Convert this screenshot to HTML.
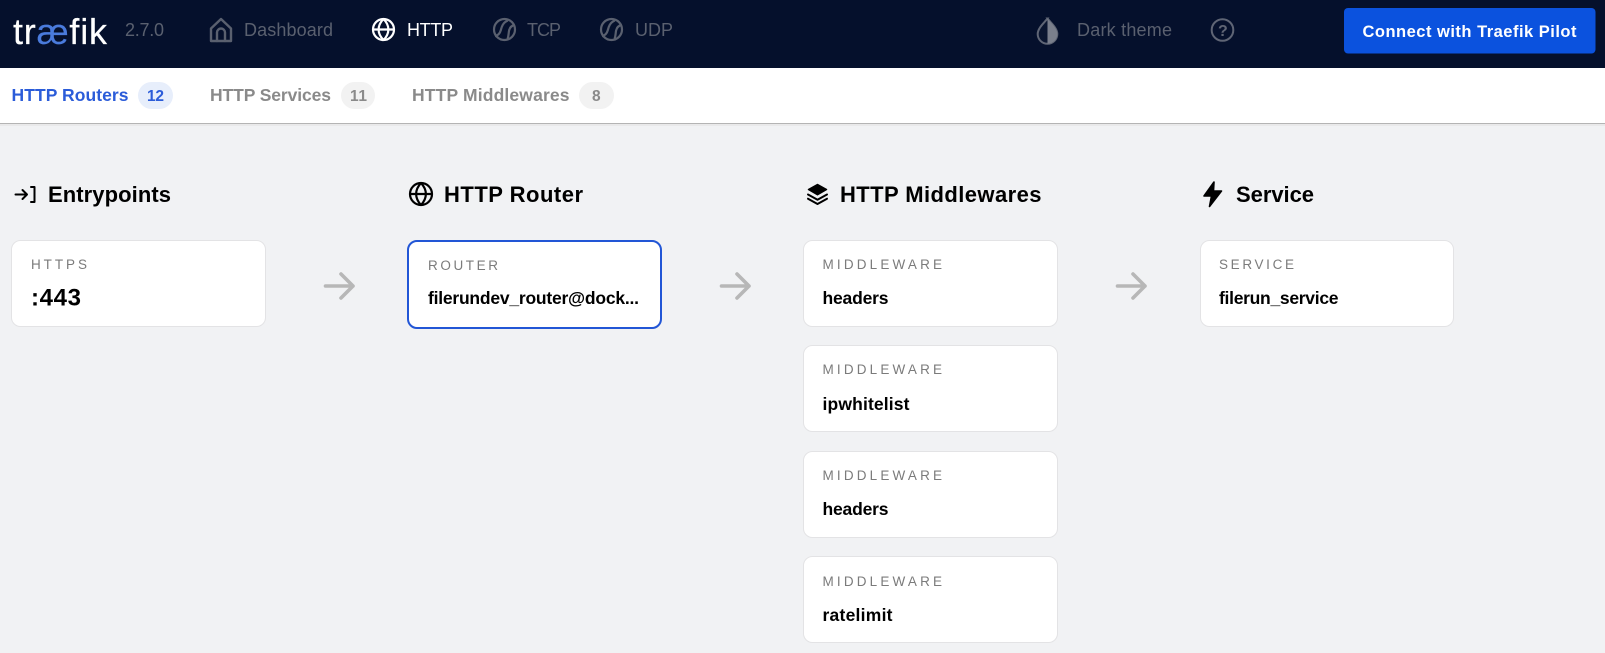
<!DOCTYPE html>
<html lang="en">
<head>
<meta charset="utf-8">
<title>Traefik</title>
<style>
html,body{margin:0;padding:0;width:1605px;height:653px;overflow:hidden;background:#f1f2f4}
svg{display:block}
text{font-family:"Liberation Sans",sans-serif;white-space:pre}
.nav{font-size:18px;fill:#5a606f}
.tab{font-size:17.5px;font-weight:700}
.bdg{font-size:15.5px;font-weight:700}
.h{font-size:22px;font-weight:700;fill:#000}
.lab{font-size:13.5px;fill:#7b7b7b}
.val{font-size:17.5px;font-weight:700;fill:#000}
.card{fill:#fff;stroke:#e3e3e5;stroke-width:1}
.ar{fill:none;stroke:#b7b7b7;stroke-width:3.6;stroke-linecap:round;stroke-linejoin:round}
</style>
</head>
<body>
<svg width="1605" height="653" viewBox="0 0 1605 653" xmlns="http://www.w3.org/2000/svg">
<rect width="1605" height="653" fill="#f1f2f4"/>
<!-- top nav -->
<rect width="1605" height="68" fill="#05102c"/>
<text x="13" y="44" font-size="36" fill="#fff" stroke="#fff" stroke-width=".2" textLength="94" lengthAdjust="spacing">tr<tspan fill="#4a7bdc" stroke="#4a7bdc">æ</tspan>fik</text>
<text class="nav" x="125" y="36" textLength="39">2.7.0</text>
<!-- home -->
<g fill="none" stroke="#5a606f" stroke-width="2.4" stroke-linejoin="round" stroke-linecap="round">
<path d="M211 28.500 221 19l10 9.500V41H211z"/>
<path d="M217 41v-8.500a4 4 0 0 1 8 0V41"/>
</g>
<text class="nav" x="244" y="36" textLength="89">Dashboard</text>
<!-- globe active -->
<g fill="none" stroke="#fff" stroke-width="2.2">
<circle cx="383.500" cy="29.500" r="10.500"/>
<path d="M373 29.500h21M383.500 19c-6.500 6.500-6.500 14.500 0 21M383.500 19c6.500 6.500 6.500 14.500 0 21"/>
</g>
<text x="407" y="36" font-size="18" fill="#fff" textLength="46">HTTP</text>
<!-- ball TCP -->
<g fill="none" stroke="#5a606f" stroke-width="2.2">
<circle cx="504.500" cy="29.500" r="10.500"/>
<path d="M495 36.200c3-.8 5-3 5.800-6s1.700-7.500 7-9.700M514.800 25c-3.500.5-5 2.500-5.700 5.500s-.3 5.500-1.600 8.500"/>
</g>
<text class="nav" x="527" y="36" textLength="34">TCP</text>
<!-- ball UDP -->
<g fill="none" stroke="#5a606f" stroke-width="2.2">
<circle cx="611.500" cy="29.500" r="10.500"/>
<path d="M602 36.200c3-.8 5-3 5.800-6s1.700-7.500 7-9.700M621.800 25c-3.500.5-5 2.500-5.700 5.500s-.3 5.500-1.600 8.500"/>
</g>
<text class="nav" x="635" y="36" textLength="38">UDP</text>
<!-- drop -->
<path d="M1047.500 18.500c-3 4-9.800 9.500-9.800 15.500a9.800 9.800 0 0 0 19.600 0c0-6-6.800-11.500-9.800-15.500z" fill="#0a1530" stroke="#5f6575" stroke-width="2"/>
<path d="M1047.500 18.500c3 4 9.800 9.500 9.800 15.500a9.800 9.800 0 0 1-9.800 9.800z" fill="#7a7f8c"/>
<text class="nav" x="1077" y="36" textLength="95">Dark theme</text>
<!-- help -->
<circle cx="1222.500" cy="30" r="10.800" fill="none" stroke="#5f6575" stroke-width="2"/>
<text x="1218" y="36" font-size="16" font-weight="700" fill="#5f6575">?</text>
<!-- button -->
<rect x="1344" y="8" width="251.500" height="45.500" rx="4" fill="#0b52de"/>
<text x="1362.500" y="37" font-size="16.500" font-weight="700" fill="#fff" textLength="214">Connect with Traefik Pilot</text>

<!-- tabs -->
<rect y="68" width="1605" height="55" fill="#fff"/>
<rect y="123" width="1605" height="1" fill="#b4b4b4"/>
<rect y="124" width="1605" height="2" fill="#e9e9ea"/>
<text class="tab" x="11.500" y="101" fill="#2b5cd9" textLength="117">HTTP Routers</text>
<rect x="138" y="82" width="35" height="27" rx="13.500" fill="#e7eefb"/>
<text class="bdg" x="147" y="101" fill="#2b5cd9" textLength="17">12</text>
<text class="tab" x="210" y="101" fill="#8a8a8a" textLength="121">HTTP Services</text>
<rect x="341" y="82" width="34" height="27" rx="13.500" fill="#f2f2f2"/>
<text class="bdg" x="350" y="101" fill="#8a8a8a" textLength="17">11</text>
<text class="tab" x="412" y="101" fill="#8a8a8a" textLength="157.500">HTTP Middlewares</text>
<rect x="579" y="82" width="35" height="27" rx="13.500" fill="#f2f2f2"/>
<text class="bdg" x="592" y="101" fill="#8a8a8a" textLength="9">8</text>

<!-- headings -->
<g fill="none" stroke="#000" stroke-width="2" stroke-linecap="round" stroke-linejoin="round">
<path d="M15.500 194.500h11.500M22.500 190l4.500 4.500-4.500 4.500"/>
<path d="M31 187h3.500v15H31"/>
</g>
<text class="h" x="48" y="202" textLength="123">Entrypoints</text>
<g fill="none" stroke="#000" stroke-width="2.2">
<circle cx="421" cy="194" r="11"/>
<path d="M410 194h22M421 183c-6.500 7-6.500 15 0 22M421 183c6.500 7 6.500 15 0 22"/>
</g>
<text class="h" x="444" y="202" textLength="139">HTTP Router</text>
<path d="M817.500 184.500 808.500 189.500l9 5.200 9-5.200z" fill="#000" stroke="#000" stroke-width="1.500" stroke-linejoin="round"/>
<path d="M808 194.500l9.500 5.300 9.500-5.300M808 198.700l9.500 5.300 9.500-5.300" fill="none" stroke="#000" stroke-width="2" stroke-linecap="round" stroke-linejoin="round"/>
<text class="h" x="840" y="202" textLength="201.500">HTTP Middlewares</text>
<path d="M1214 182 1204 196h7.500l-2 10.500L1221.500 191h-8z" fill="#000" stroke="#000" stroke-width="1.600" stroke-linejoin="round"/>
<text class="h" x="1236" y="202" textLength="78">Service</text>

<!-- arrows -->
<path class="ar" d="M325.500 286h27.500M341 274l12 12-12 12"/>
<path class="ar" d="M721.500 286h27.500M737 274l12 12-12 12"/>
<path class="ar" d="M1117.500 286h27.500M1133 274l12 12-12 12"/>

<!-- cards -->
<rect class="card" x="11.500" y="240.500" width="254" height="86" rx="9"/>
<text class="lab" x="31" y="269" textLength="56">HTTPS</text>
<text x="31" y="305.500" font-size="24" font-weight="700" fill="#000" textLength="50">:443</text>

<rect x="408" y="241" width="253" height="87" rx="9" fill="#fff" stroke="#2256d6" stroke-width="2"/>
<text class="lab" x="428" y="270" textLength="70">ROUTER</text>
<text class="val" x="428" y="304" textLength="211">filerundev_router@dock...</text>

<rect class="card" x="803.500" y="240.500" width="254" height="86" rx="9"/>
<text class="lab" x="822.500" y="269" textLength="119.500">MIDDLEWARE</text>
<text class="val" x="822.500" y="304" textLength="66">headers</text>

<rect class="card" x="803.500" y="345.500" width="254" height="86" rx="9"/>
<text class="lab" x="822.500" y="374" textLength="119.500">MIDDLEWARE</text>
<text class="val" x="822.500" y="410" textLength="87">ipwhitelist</text>

<rect class="card" x="803.500" y="451.500" width="254" height="86" rx="9"/>
<text class="lab" x="822.500" y="480" textLength="119.500">MIDDLEWARE</text>
<text class="val" x="822.500" y="515" textLength="66">headers</text>

<rect class="card" x="803.500" y="556.500" width="254" height="86" rx="9"/>
<text class="lab" x="822.500" y="586" textLength="119.500">MIDDLEWARE</text>
<text class="val" x="822.500" y="621" textLength="70">ratelimit</text>

<rect class="card" x="1200.500" y="240.500" width="253" height="86" rx="9"/>
<text class="lab" x="1219" y="269" textLength="75">SERVICE</text>
<text class="val" x="1219" y="304" textLength="119.500">filerun_service</text>
</svg>
</body>
</html>
